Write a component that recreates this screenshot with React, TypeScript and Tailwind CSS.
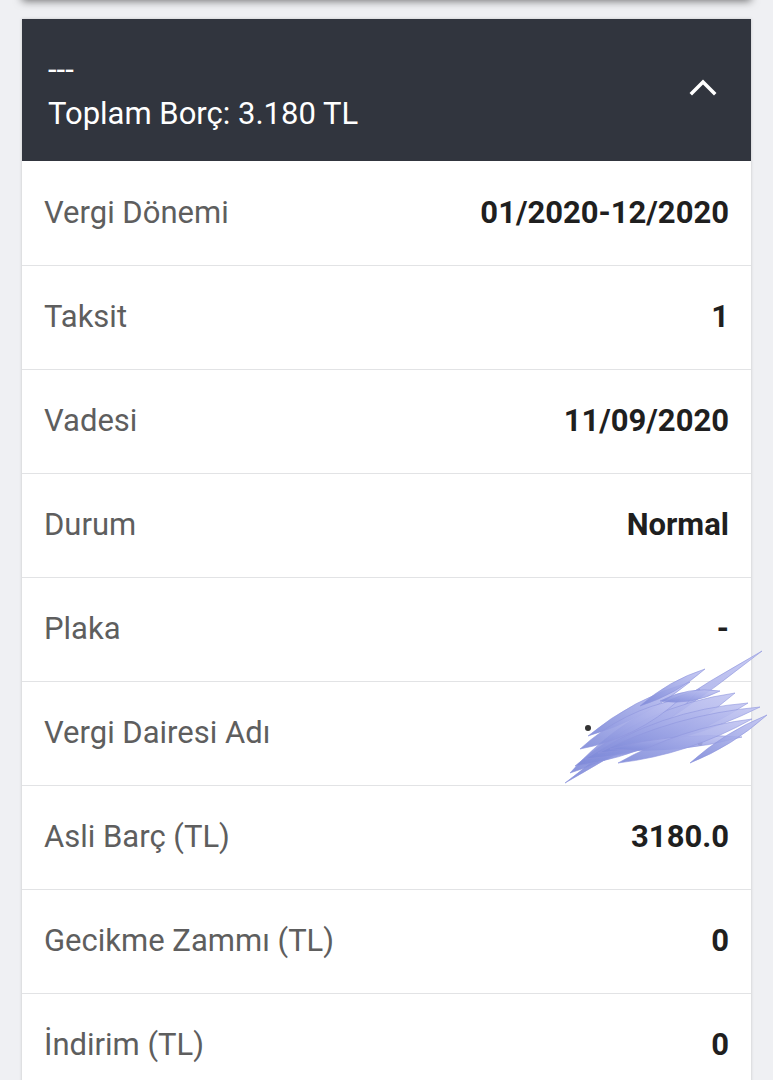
import React from "react";

const rows: { label: string; value: string }[] = [
  { label: "Vergi Dönemi", value: "01/2020-12/2020" },
  { label: "Taksit", value: "1" },
  { label: "Vadesi", value: "11/09/2020" },
  { label: "Durum", value: "Normal" },
  { label: "Plaka", value: "-" },
  { label: "Vergi Dairesi Adı", value: "" },
  { label: "Asli Barç (TL)", value: "3180.0" },
  { label: "Gecikme Zammı (TL)", value: "0" },
  { label: "İndirim (TL)", value: "0" },
];

function Scribble() {
  const lens = (x1: number, y1: number, x2: number, y2: number, w: number) => {
    const mx = (x1 + x2) / 2;
    const my = (y1 + y2) / 2;
    const dx = x2 - x1;
    const dy = y2 - y1;
    const len = Math.hypot(dx, dy);
    const nx = (-dy / len) * w;
    const ny = (dx / len) * w;
    return `M${x1} ${y1} Q${mx + nx} ${my + ny} ${x2} ${y2} Q${mx - nx} ${my - ny} ${x1} ${y1} Z`;
  };
  const ox = 550;
  const oy = 640;
  const shapes: [number, number, number, number, number][] = [
    [565, 782, 762, 650, 10],
    [570, 772, 700, 688, 22],
    [575, 765, 735, 692, 26],
    [585, 758, 748, 702, 22],
    [598, 752, 760, 706, 16],
    [610, 748, 742, 736, 12],
    [690, 762, 767, 714, 8],
    [588, 735, 690, 681, 12],
    [580, 748, 680, 698, 16],
    [618, 762, 752, 718, 14],
    [640, 705, 705, 668, 8],
    [660, 700, 720, 690, 10],
  ];
  return (
    <svg
      className="absolute pointer-events-none"
      style={{ left: ox - 22, top: oy - 681 }}
      width={230}
      height={150}
      viewBox={`${ox} ${oy} 230 150`}
    >
      <defs>
        <linearGradient id="sg" x1="0" y1="1" x2="1" y2="0">
          <stop offset="0" stopColor="#7c88d8" />
          <stop offset="0.55" stopColor="#a4abe8" />
          <stop offset="1" stopColor="#c3c6f2" />
        </linearGradient>
      </defs>
      <circle cx="588" cy="727" r="3" fill="#333" />
      <circle cx="700" cy="742" r="2.5" fill="#333" />
      {shapes.map((s, i) => (
        <path
          key={i}
          d={lens(s[0], s[1], s[2], s[3], s[4])}
          fill="url(#sg)"
          fillOpacity={0.9}
          stroke="#8e96dd"
          strokeWidth={0.6}
        />
      ))}
    </svg>
  );
}

export default function App() {
  return (
    <div
      className="min-h-[1080px] bg-[#eff0f3] overflow-hidden"
      style={{ fontFamily: "Roboto, 'Liberation Sans', sans-serif" }}
    >
      <div className="h-[20px] mx-[22px] -mt-[22px] bg-white shadow-[0_3px_9px_rgba(0,0,0,0.55)]" />
      <div className="mx-[22px] mt-[21px] bg-white shadow-[0_0_3px_rgba(0,0,0,0.18)]">
        <div className="h-[142px] bg-[#31353e] flex items-center justify-between pl-[26px] pr-[34px]">
          <div className="flex flex-col text-white">
            <div className="text-[31px] leading-[30px] mt-[6px]">---</div>
            <div className="text-[31px] leading-[34px] mt-[12px]">Toplam Borç: 3.180 TL</div>
          </div>
          <svg width="28" height="18" viewBox="0 0 28 18" className="-mt-[6px]">
            <path d="M3 15 L14 4 L25 15" fill="none" stroke="white" strokeWidth="3.5" strokeLinecap="square" />
          </svg>
        </div>
        {rows.map((r, i) => (
          <div
            key={i}
            className={`relative h-[104px] flex items-center justify-between px-[22px] ${i > 0 ? "border-t border-[#e2e3e5]" : ""}`}
          >
            <span className="text-[31px] text-[#5e5e5e]">{r.label}</span>
            <span className="text-[31px] font-bold text-[#1f1f1f]">{r.value}</span>
            {r.label === "Vergi Dairesi Adı" && <Scribble />}
          </div>
        ))}
      </div>
    </div>
  );
}
